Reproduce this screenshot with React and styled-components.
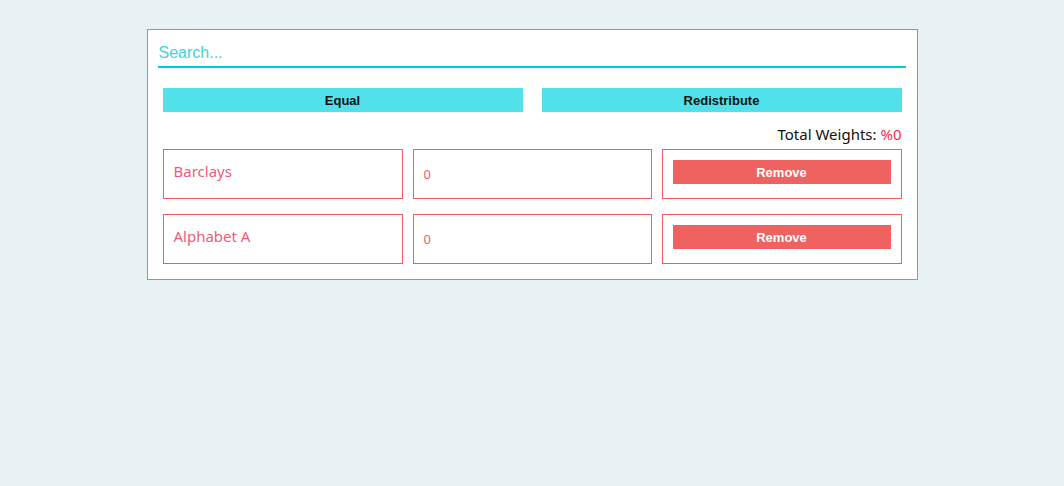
import { Fragment } from "react";
import styled, { createGlobalStyle } from "styled-components";

const GlobalStyle = createGlobalStyle`
  html, body {
    margin: 0;
    background-color: #e8f1f3;
  }
  body {
    padding-top: 29px;
    font-family: "Noto Sans", "Open Sans", sans-serif;
  }
`;

const Panel = styled.div`
  width: 749px;
  margin: 0 auto;
  padding: 10px 10px 15px;
  background-color: #fff;
  border: 1px solid #26c6d0;
`;

const SearchInput = styled.input`
  display: block;
  box-sizing: border-box;
  width: calc(100% - 1px);
  height: 28px;
  padding: 0 1px 1px;
  border: none;
  border-bottom: 2px solid #00ccd8;
  outline: none;
  font-family: "Liberation Sans", Arial, sans-serif;
  font-size: 16px;
  color: #00ccd8;

  &::placeholder {
    color: #3fd3dd;
  }
`;

const Toolbar = styled.div`
  display: flex;
  justify-content: space-between;
  padding: 20px 5px 0 5px;
`;

const ToolButton = styled.button`
  width: 360px;
  height: 24px;
  border: none;
  background-color: #50e1ea;
  font-family: "Liberation Sans", Arial, sans-serif;
  font-size: 13px;
  font-weight: 700;
  color: #111;
  cursor: pointer;
`;

const Total = styled.div`
  text-align: right;
  padding: 11px 5px 0 0;
  height: 26px;
  line-height: 22px;
  font-size: 15px;
  color: #111;
`;

const Percent = styled.span`
  color: #ff1f4b;
`;

const Grid = styled.div`
  display: grid;
  grid-template-columns: 240px 239px 240px;
  column-gap: 10px;
  row-gap: 15px;
  padding: 0 5px;
`;

const Cell = styled.div`
  box-sizing: border-box;
  height: 50px;
  padding: 10px;
  border: 1px solid #ef5f5f;
`;

const Name = styled.div`
  line-height: 22px;
  font-size: 15px;
  color: #ef5c78;
`;

const WeightInput = styled.input`
  box-sizing: border-box;
  width: 100%;
  height: 28px;
  padding: 0;
  border: none;
  outline: none;
  font-family: "Noto Sans", sans-serif;
  font-size: 13px;
  color: #ee6068;
`;

const RemoveButton = styled.button`
  display: block;
  width: 100%;
  height: 24px;
  border: none;
  background-color: #ef625f;
  font-family: "Liberation Sans", Arial, sans-serif;
  font-size: 13px;
  font-weight: 700;
  color: #fff;
  cursor: pointer;
`;

const stocks = [
  { name: "Barclays", weight: 0 },
  { name: "Alphabet A", weight: 0 },
];

export default function App() {
  return (
    <>
      <GlobalStyle />
      <Panel>
        <SearchInput placeholder="Search..." />
        <Toolbar>
          <ToolButton>Equal</ToolButton>
          <ToolButton>Redistribute</ToolButton>
        </Toolbar>
        <Total>
          Total Weights: <Percent>%0</Percent>
        </Total>
        <Grid>
          {stocks.map((s) => (
            <Fragment key={s.name}>
              <Cell>
                <Name>{s.name}</Name>
              </Cell>
              <Cell>
                <WeightInput defaultValue={s.weight} />
              </Cell>
              <Cell>
                <RemoveButton>Remove</RemoveButton>
              </Cell>
            </Fragment>
          ))}
        </Grid>
      </Panel>
    </>
  );
}
